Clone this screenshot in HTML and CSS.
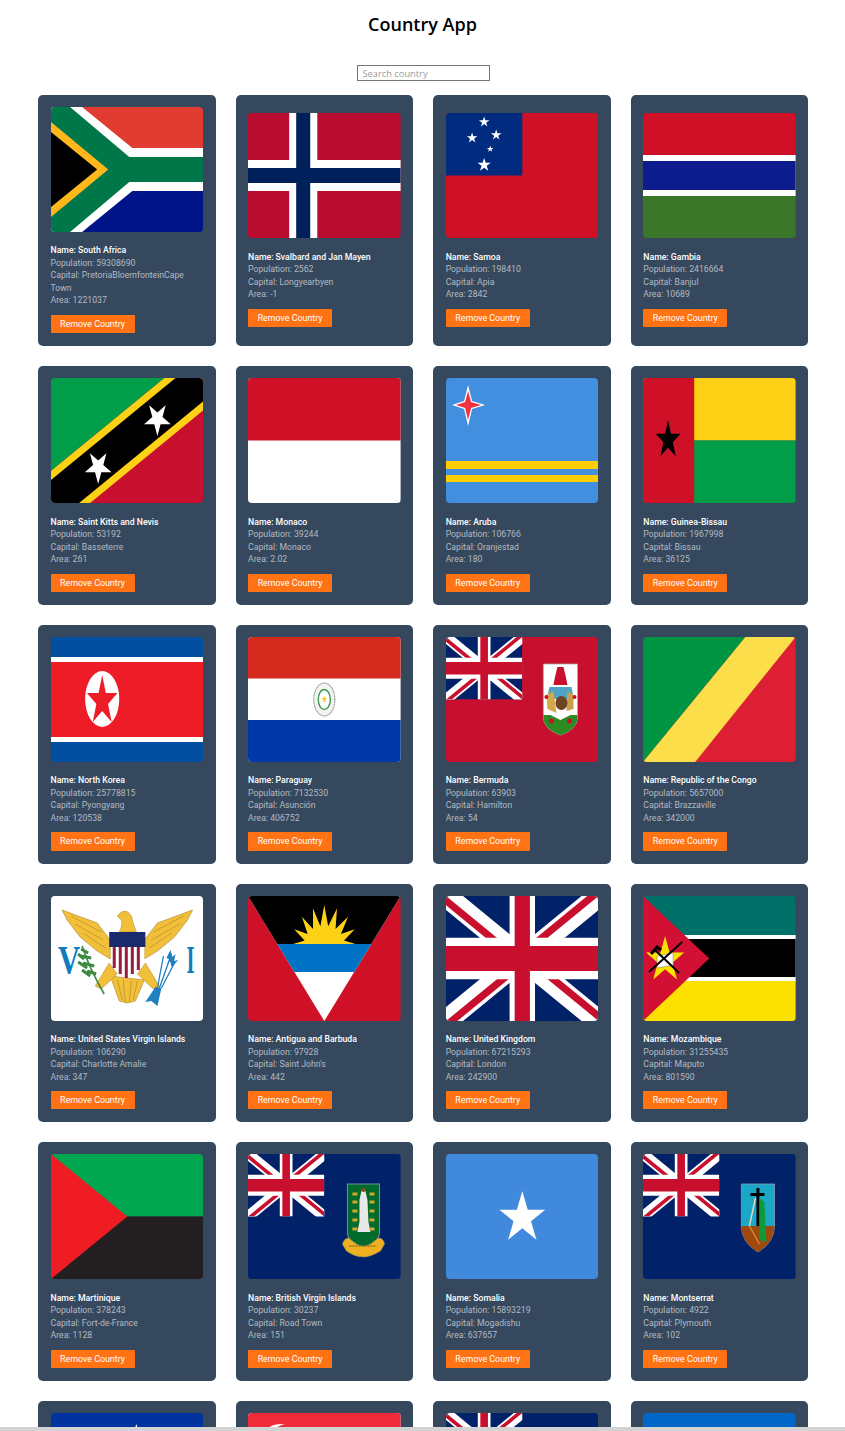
FILE: index.html
```html
<!DOCTYPE html>
<html lang="en">
<head>
  <meta charset="UTF-8" />
  <meta name="viewport" content="width=device-width, initial-scale=1.0" />
  <title>Country App</title>
  <link rel="stylesheet" href="styles.css">
</head>
<body>
  <!-- shared flag parts -->
  <svg class="defs" aria-hidden="true">
    <defs>
      <polygon id="star" points="0,-1 .225,-.309 .951,-.309 .363,.118 .588,.809 0,.382 -.588,.809 -.363,.118 -.951,-.309 -.225,-.309"/>
      <clipPath id="ujClip"><path d="M30,15h30v15zv15h-30zh-30v-15zv-15h30z"/></clipPath>
      <symbol id="uj" viewBox="0 0 60 30" preserveAspectRatio="none">
        <rect width="60" height="30" fill="#012169"/>
        <path d="M0,0L60,30M60,0L0,30" stroke="#fff" stroke-width="6"/>
        <path d="M0,0L60,30M60,0L0,30" stroke="#c8102e" stroke-width="4" clip-path="url(#ujClip)"/>
        <path d="M30,0v30M0,15h60" stroke="#fff" stroke-width="10"/>
        <path d="M30,0v30M0,15h60" stroke="#c8102e" stroke-width="6"/>
      </symbol>
    </defs>
  </svg>

  <h1 class="title">Country App</h1>

  <div class="search">
    <input class="search-input" type="text" placeholder="Search country" />
  </div>

  <div class="country-list">

    <div class="card">
      <svg class="flag" viewBox="0 0 152 125" preserveAspectRatio="none">
        <rect width="152" height="63" fill="#e03c31"/>
        <rect y="62" width="152" height="63" fill="#001489"/>
        <polygon points="0,0 31,0 81,41 152,41 152,84 81,84 31,125 0,125" fill="#fff"/>
        <polygon points="0,0 19,0 78,50 152,50 152,75 78,75 19,125 0,125" fill="#007749"/>
        <polygon points="0,15 57,62.5 0,110" fill="#ffb81c"/>
        <polygon points="0,25 46,62.5 0,100" fill="#000"/>
      </svg>
      <p class="name">Name: South Africa</p>
      <p class="info">Population: 59308690</p>
      <p class="info">Capital: PretoriaBloemfonteinCape Town</p>
      <p class="info">Area: 1221037</p>
      <button class="remove-btn">Remove Country</button>
    </div>

    <div class="card">
      <svg class="flag" viewBox="0 0 152 125" preserveAspectRatio="none">
        <rect width="152" height="125" fill="#ba0c2f"/>
        <rect x="41" width="28" height="125" fill="#fff"/>
        <rect y="47" width="152" height="31" fill="#fff"/>
        <rect x="48" width="14" height="125" fill="#00205b"/>
        <rect y="55" width="152" height="15" fill="#00205b"/>
      </svg>
      <p class="name">Name: Svalbard and Jan Mayen</p>
      <p class="info">Population: 2562</p>
      <p class="info">Capital: Longyearbyen</p>
      <p class="info">Area: -1</p>
      <button class="remove-btn">Remove Country</button>
    </div>

    <div class="card">
      <svg class="flag" viewBox="0 0 152 125" preserveAspectRatio="none">
        <rect width="152" height="125" fill="#ce1126"/>
        <rect width="76" height="62.5" fill="#002b7f"/>
        <use href="#star" fill="#fff" transform="translate(38,9) scale(5.5)"/>
        <use href="#star" fill="#fff" transform="translate(26,25) scale(5.5)"/>
        <use href="#star" fill="#fff" transform="translate(50,22) scale(5.5)"/>
        <use href="#star" fill="#fff" transform="translate(44,36) scale(3.5)"/>
        <use href="#star" fill="#fff" transform="translate(38,52) scale(7)"/>
      </svg>
      <p class="name">Name: Samoa</p>
      <p class="info">Population: 198410</p>
      <p class="info">Capital: Apia</p>
      <p class="info">Area: 2842</p>
      <button class="remove-btn">Remove Country</button>
    </div>

    <div class="card">
      <svg class="flag" viewBox="0 0 152 125" preserveAspectRatio="none">
        <rect width="152" height="42" fill="#ce1126"/>
        <rect y="42" width="152" height="41" fill="#fff"/>
        <rect y="48" width="152" height="29" fill="#0c1c8c"/>
        <rect y="83" width="152" height="42" fill="#3a7728"/>
      </svg>
      <p class="name">Name: Gambia</p>
      <p class="info">Population: 2416664</p>
      <p class="info">Capital: Banjul</p>
      <p class="info">Area: 10689</p>
      <button class="remove-btn">Remove Country</button>
    </div>

    <div class="card">
      <svg class="flag" viewBox="0 0 152 125" preserveAspectRatio="none">
        <rect width="152" height="125" fill="#c8102e"/>
        <polygon points="0,0 113,0 0,93" fill="#009e49"/>
        <polygon points="113,0 152,0 152,32 39,125 0,125 0,93" fill="#fcd116"/>
        <polygon points="124,0 152,0 152,23 28,125 0,125 0,102" fill="#000"/>
        <use href="#star" fill="#fff" transform="translate(106,41) rotate(180) scale(14,17)"/>
        <use href="#star" fill="#fff" transform="translate(47,89) rotate(180) scale(14,17)"/>
      </svg>
      <p class="name">Name: Saint Kitts and Nevis</p>
      <p class="info">Population: 53192</p>
      <p class="info">Capital: Basseterre</p>
      <p class="info">Area: 261</p>
      <button class="remove-btn">Remove Country</button>
    </div>

    <div class="card">
      <svg class="flag" viewBox="0 0 152 125" preserveAspectRatio="none">
        <rect width="152" height="125" fill="#fff"/>
        <rect width="152" height="62.5" fill="#ce1126"/>
      </svg>
      <p class="name">Name: Monaco</p>
      <p class="info">Population: 39244</p>
      <p class="info">Capital: Monaco</p>
      <p class="info">Area: 2.02</p>
      <button class="remove-btn">Remove Country</button>
    </div>

    <div class="card">
      <svg class="flag" viewBox="0 0 152 125" preserveAspectRatio="none">
        <rect width="152" height="125" fill="#418fde"/>
        <rect y="83" width="152" height="8" fill="#ffcd00"/>
        <rect y="97" width="152" height="7" fill="#ffcd00"/>
        <path d="M22,7L26,23L39,27L26,31L22,48L18,31L6,27L18,23Z" fill="#fff"/>
        <path d="M22,13L25,24L35,27L25,30L22,42L19,30L10,27L19,24Z" fill="#ef3340"/>
      </svg>
      <p class="name">Name: Aruba</p>
      <p class="info">Population: 106766</p>
      <p class="info">Capital: Oranjestad</p>
      <p class="info">Area: 180</p>
      <button class="remove-btn">Remove Country</button>
    </div>

    <div class="card">
      <svg class="flag" viewBox="0 0 152 125" preserveAspectRatio="none">
        <rect width="152" height="62.5" fill="#fcd116"/>
        <rect y="62.5" width="152" height="62.5" fill="#009e49"/>
        <rect width="51" height="125" fill="#ce1126"/>
        <use href="#star" fill="#000" transform="translate(25,62) scale(13,20)"/>
      </svg>
      <p class="name">Name: Guinea-Bissau</p>
      <p class="info">Population: 1967998</p>
      <p class="info">Capital: Bissau</p>
      <p class="info">Area: 36125</p>
      <button class="remove-btn">Remove Country</button>
    </div>

    <div class="card">
      <svg class="flag" viewBox="0 0 152 125" preserveAspectRatio="none">
        <rect width="152" height="125" fill="#024fa2"/>
        <rect y="20" width="152" height="85" fill="#fff"/>
        <rect y="25" width="152" height="75" fill="#ed1c27"/>
        <ellipse cx="51" cy="62" rx="17" ry="28" fill="#fff"/>
        <use href="#star" fill="#ed1c27" transform="translate(51,64) scale(16,26)"/>
      </svg>
      <p class="name">Name: North Korea</p>
      <p class="info">Population: 25778815</p>
      <p class="info">Capital: Pyongyang</p>
      <p class="info">Area: 120538</p>
      <button class="remove-btn">Remove Country</button>
    </div>

    <div class="card">
      <svg class="flag" viewBox="0 0 152 125" preserveAspectRatio="none">
        <rect width="152" height="125" fill="#fff"/>
        <rect width="152" height="41.5" fill="#d52b1e"/>
        <rect y="83" width="152" height="42" fill="#0038a8"/>
        <ellipse cx="76" cy="62.5" rx="10.5" ry="16.5" fill="#f4f4f0" stroke="#888" stroke-width="1" stroke-dasharray="1.5 .6"/>
        <ellipse cx="76" cy="62.5" rx="6" ry="10" fill="#fff" stroke="#3b9a55" stroke-width="1.4"/>
        <use href="#star" fill="#f2c81e" transform="translate(76,62.5) scale(2.8,4)"/>
      </svg>
      <p class="name">Name: Paraguay</p>
      <p class="info">Population: 7132530</p>
      <p class="info">Capital: Asunción</p>
      <p class="info">Area: 406752</p>
      <button class="remove-btn">Remove Country</button>
    </div>

    <div class="card">
      <svg class="flag" viewBox="0 0 152 125" preserveAspectRatio="none">
        <rect width="152" height="125" fill="#c8102e"/>
        <use href="#uj" width="76" height="62.5"/>
        <path d="M97,27H131V80Q131,92 114,98Q97,92 97,80Z" fill="#fff" stroke="#a9a9a9" stroke-width=".8"/>
        <path d="M97,78H104L114,83L124,78H131V80Q131,92 114,98Q97,92 97,80Z" fill="#2e8b22"/>
        <path d="M111,30H117L119,38L121,48H107L109,38Z" fill="#c8102e"/>
        <path d="M103,50H125L127,60L122,62H106L101,60Z" fill="#4fa3c7"/>
        <path d="M100,58L107,54L110,76L101,72Z" fill="#d4a94a"/>
        <path d="M127,58L121,54L120,74L127,72Z" fill="#c9a04a"/>
        <ellipse cx="115" cy="66" rx="6" ry="7" fill="#6e4422"/>
        <circle cx="100" cy="60" r="2" fill="#c8102e"/>
        <circle cx="128" cy="60" r="2" fill="#c8102e"/>
        <circle cx="105" cy="84" r="2.5" fill="#c8102e"/>
        <circle cx="123" cy="84" r="2.5" fill="#c8102e"/>
      </svg>
      <p class="name">Name: Bermuda</p>
      <p class="info">Population: 63903</p>
      <p class="info">Capital: Hamilton</p>
      <p class="info">Area: 54</p>
      <button class="remove-btn">Remove Country</button>
    </div>

    <div class="card">
      <svg class="flag" viewBox="0 0 152 125" preserveAspectRatio="none">
        <rect width="152" height="125" fill="#dc1f33"/>
        <polygon points="0,0 102,0 0,125" fill="#009543"/>
        <polygon points="102,0 152,0 52,125 0,125" fill="#fbde4a"/>
      </svg>
      <p class="name">Name: Republic of the Congo</p>
      <p class="info">Population: 5657000</p>
      <p class="info">Capital: Brazzaville</p>
      <p class="info">Area: 342000</p>
      <button class="remove-btn">Remove Country</button>
    </div>

    <div class="card">
      <svg class="flag" viewBox="0 0 152 125" preserveAspectRatio="none">
        <rect width="152" height="125" fill="#fff"/>
        <text class="flag-letter" x="7" y="77" textLength="22" lengthAdjust="spacingAndGlyphs">V</text>
        <text class="flag-letter" x="135" y="77" textLength="8" lengthAdjust="spacingAndGlyphs">I</text>
        <polygon points="11,14 46,27 59,44 59,63 46,55 29,41 16,24" fill="#f2bf3a" stroke="#a88427" stroke-width=".6"/>
        <polygon points="141,14 106,27 93,44 93,63 106,55 123,41 136,24" fill="#f2bf3a" stroke="#a88427" stroke-width=".6"/>
        <path d="M20,20L50,36M24,28L52,44M32,37L54,52M132,20L102,36M128,28L100,44M120,37L98,52" stroke="#a88427" stroke-width=".6"/>
        <path d="M66,20Q74,10 80,20Q82,28 85,36H68Q72,28 70,24Z" fill="#f2bf3a" stroke="#a88427" stroke-width=".5"/>
        <polygon points="59,80 93,84 84,105 76,107 68,105" fill="#f2bf3a" stroke="#a88427" stroke-width=".6"/>
        <path d="M66,84L71,104M72,84L74,106M80,85L78,106M86,85L82,104" stroke="#a88427" stroke-width=".6"/>
        <path d="M58,67L44,90L50,93L66,78ZM94,67L108,90L102,93L86,78Z" fill="#f2bf3a" stroke="#a88427" stroke-width=".5"/>
        <rect x="58" y="36" width="36" height="15" fill="#1a2a6c"/>
        <path d="M60,51H93V66Q90,76 76,82Q62,76 60,66Z" fill="#fff"/>
        <path d="M63,51V72M69,51V78M75,51V82M81,51V78M87,51V74" stroke="#9b1b3f" stroke-width="3"/>
        <path d="M31,50Q38,72 53,98" stroke="#3d8b40" stroke-width="1.6" fill="none"/>
        <path d="M30,53L37,57M30,60L40,62M32,67L43,70M36,75L45,78M27,58L33,63M27,66L36,72M31,74L39,80" stroke="#3d8b40" stroke-width="3"/>
        <path d="M106,92L112,60M108,92L120,58M110,92L124,65" stroke="#1f7fc1" stroke-width="1.3"/>
        <path d="M119,54L122,65L115,62ZM124,58L122,68L117,65ZM127,64L120,71L119,66Z" fill="#1f7fc1"/>
        <polygon points="104,91 110,92 106,110 100,105 94,106" fill="#1f7fc1"/>
      </svg>
      <p class="name">Name: United States Virgin Islands</p>
      <p class="info">Population: 106290</p>
      <p class="info">Capital: Charlotte Amalie</p>
      <p class="info">Area: 347</p>
      <button class="remove-btn">Remove Country</button>
    </div>

    <div class="card">
      <svg class="flag" viewBox="0 0 152 125" preserveAspectRatio="none">
        <rect width="152" height="125" fill="#ce1126"/>
        <polygon points="0,0 152,0 76,125" fill="#fff"/>
        <polygon points="0,0 152,0 122.8,48 29.2,48" fill="#000"/>
        <polygon points="29.2,48 122.8,48 105.8,76 46.2,76" fill="#0072c6"/>
        <polygon points="45,48 56.4,44.6 46,33.3 59.4,38 53.7,20.7 64.8,33.1 64.7,12.3 72.1,30.3 76,9 79.9,30.3 88.7,12.3 87.2,33.1 99.7,20.7 92.6,38 106.3,33.3 95.6,44.6 107,48" fill="#fcd116"/>
      </svg>
      <p class="name">Name: Antigua and Barbuda</p>
      <p class="info">Population: 97928</p>
      <p class="info">Capital: Saint John's</p>
      <p class="info">Area: 442</p>
      <button class="remove-btn">Remove Country</button>
    </div>

    <div class="card">
      <svg class="flag" viewBox="0 0 152 125" preserveAspectRatio="none">
        <use href="#uj" width="152" height="125"/>
      </svg>
      <p class="name">Name: United Kingdom</p>
      <p class="info">Population: 67215293</p>
      <p class="info">Capital: London</p>
      <p class="info">Area: 242900</p>
      <button class="remove-btn">Remove Country</button>
    </div>

    <div class="card">
      <svg class="flag" viewBox="0 0 152 125" preserveAspectRatio="none">
        <rect width="152" height="39" fill="#007168"/>
        <rect y="39" width="152" height="47" fill="#fff"/>
        <rect y="43" width="152" height="38" fill="#000"/>
        <rect y="85" width="152" height="40" fill="#fce100"/>
        <polygon points="0,0 66,62.5 0,125" fill="#d21034"/>
        <use href="#star" fill="#fce100" transform="translate(22,64) scale(20,24)"/>
        <path d="M14,60L30,57V69L14,72Z" fill="#fff" stroke="#777" stroke-width=".5"/>
        <path d="M6,76L39,46M12,54L36,77" stroke="#000" stroke-width="2"/>
        <path d="M8,58L14,51L18,54" stroke="#000" stroke-width="3" fill="none"/>
      </svg>
      <p class="name">Name: Mozambique</p>
      <p class="info">Population: 31255435</p>
      <p class="info">Capital: Maputo</p>
      <p class="info">Area: 801590</p>
      <button class="remove-btn">Remove Country</button>
    </div>

    <div class="card">
      <svg class="flag" viewBox="0 0 152 125" preserveAspectRatio="none">
        <rect width="152" height="62.5" fill="#00a650"/>
        <rect y="62.5" width="152" height="62.5" fill="#231f20"/>
        <polygon points="0,0 76,62.5 0,125" fill="#ef1c24"/>
      </svg>
      <p class="name">Name: Martinique</p>
      <p class="info">Population: 378243</p>
      <p class="info">Capital: Fort-de-France</p>
      <p class="info">Area: 1128</p>
      <button class="remove-btn">Remove Country</button>
    </div>

    <div class="card">
      <svg class="flag" viewBox="0 0 152 125" preserveAspectRatio="none">
        <rect width="152" height="125" fill="#012169"/>
        <use href="#uj" width="76" height="62.5"/>
        <path d="M99,30H131V78Q131,88 115,94Q99,88 99,78Z" fill="#006b2d" stroke="#7d8c9a" stroke-width="1"/>
        <path d="M113,37H117L119,46L120,68L122,78H109L111,68L111,46Z" fill="#e8e8e8"/>
        <circle cx="115" cy="36" r="2" fill="#8a4a20"/>
        <path d="M104,40h5M104,48h5M104,57h5M104,66h5M104,75h5M121,40h5M121,48h5M121,57h5M121,66h5M121,75h5" stroke="#d4a928" stroke-width="3"/>
        <path d="M94,90Q96,84 100,84L108,90Q115,94 122,90L130,84Q135,84 136,90L132,97Q122,103 115,103Q106,103 98,97Z" fill="#eeb020" stroke="#8a8a70" stroke-width=".6"/>
        <path d="M101,92L128,92" stroke="#6b5a20" stroke-width="1.2" stroke-dasharray="2 1"/>
      </svg>
      <p class="name">Name: British Virgin Islands</p>
      <p class="info">Population: 30237</p>
      <p class="info">Capital: Road Town</p>
      <p class="info">Area: 151</p>
      <button class="remove-btn">Remove Country</button>
    </div>

    <div class="card">
      <svg class="flag" viewBox="0 0 152 125" preserveAspectRatio="none">
        <rect width="152" height="125" fill="#4189dd"/>
        <use href="#star" fill="#fff" transform="translate(76,64) scale(24,27)"/>
      </svg>
      <p class="name">Name: Somalia</p>
      <p class="info">Population: 15893219</p>
      <p class="info">Capital: Mogadishu</p>
      <p class="info">Area: 637657</p>
      <button class="remove-btn">Remove Country</button>
    </div>

    <div class="card">
      <svg class="flag" viewBox="0 0 152 125" preserveAspectRatio="none">
        <rect width="152" height="125" fill="#012169"/>
        <use href="#uj" width="76" height="62.5"/>
        <path d="M98,30H131V72Q131,88 114.5,98Q98,88 98,72Z" fill="#1ba8c8" stroke="#8ba0b4" stroke-width=".8"/>
        <path d="M98,72H131Q131,88 114.5,98Q98,88 98,72Z" fill="#a0490f"/>
        <path d="M113,34h3v38h-3zM107,39h14v3h-14z" fill="#000"/>
        <path d="M116,44L121,48L122,70L123,88L116,86Z" fill="#0d9a3a"/>
        <path d="M106,72L116,90" stroke="#d9a441" stroke-width="1"/>
        <path d="M112,44L109,58L106,72" stroke="#e8d8c0" stroke-width="1.4" fill="none"/>
      </svg>
      <p class="name">Name: Montserrat</p>
      <p class="info">Population: 4922</p>
      <p class="info">Capital: Plymouth</p>
      <p class="info">Area: 102</p>
      <button class="remove-btn">Remove Country</button>
    </div>

    <!-- last row, cut off by the window -->
    <div class="card">
      <svg class="flag" viewBox="0 0 152 125" preserveAspectRatio="none">
        <rect width="152" height="125" fill="#0033a0"/>
        <use href="#star" fill="#fff" transform="translate(85,21) scale(10)"/>
      </svg>
    </div>

    <div class="card">
      <svg class="flag" viewBox="0 0 152 125" preserveAspectRatio="none">
        <rect width="152" height="125" fill="#fff"/>
        <rect width="152" height="62.5" fill="#ef2b3a"/>
        <circle cx="32" cy="31" r="20" fill="#fff"/>
        <circle cx="40" cy="31" r="20" fill="#ef2b3a"/>
      </svg>
    </div>

    <div class="card">
      <svg class="flag" viewBox="0 0 152 125" preserveAspectRatio="none">
        <rect width="152" height="125" fill="#012169"/>
        <use href="#uj" width="76" height="62.5"/>
      </svg>
    </div>

    <div class="card">
      <svg class="flag" viewBox="0 0 152 125" preserveAspectRatio="none">
        <rect width="152" height="125" fill="#0066c8"/>
      </svg>
    </div>

  </div>

  <div class="scrollbar"></div>
</body>
</html>
```

FILE: styles.css
```css
html, body {
  height: 100%;
  overflow: hidden;
}

body {
  margin: 0;
  background-color: #ffffff;
  font-family: Roboto, "Noto Sans", sans-serif;
}

.defs {
  display: block;
  width: 0;
  height: 0;
}

.title {
  margin: 0;
  padding-top: 12px;
  height: 42px;
  line-height: 24px;
  text-align: center;
  font-family: "Open Sans", sans-serif;
  font-size: 18px;
  font-weight: 600;
  color: #000000;
}

.search {
  display: flex;
  justify-content: center;
  padding-top: 11px;
  height: 30px;
  margin-left: 1px;
}

.search-input {
  box-sizing: border-box;
  width: 133px;
  height: 16px;
  padding: 0 5px;
  border: 1px solid #767676;
  font-family: "Open Sans", sans-serif;
  font-size: 9.3px;
}

.search-input::placeholder {
  color: #9a9aa2;
}

.country-list {
  display: grid;
  grid-template-columns: repeat(4, 1fr);
  gap: 20px;
  width: 770.4px;
  margin-left: 38px;
  margin-top: -0.25px;
}

.card {
  display: flex;
  flex-direction: column;
  justify-content: center;
  align-items: flex-start;
  padding: 12px 12.5px 13px;
  background-color: #35485e;
  border-radius: 5px;
}

.flag {
  display: block;
  flex-shrink: 0;
  width: 100%;
  height: 125px;
  margin-bottom: 12.5px;
  border-radius: 4px;
}

.flag-letter {
  font-family: "Liberation Serif", serif;
  font-size: 41px;
  font-weight: 700;
  fill: #0f7cbf;
}

.name,
.info {
  margin: 0;
  font-size: 8.7px;
  line-height: 12.5px;
}

.name {
  color: #ffffff;
  font-weight: 500;
}

.info {
  color: #b4bac1;
}

.remove-btn {
  width: 84px;
  height: 18.25px;
  margin-top: 8px;
  padding: 0;
  background-color: #ff7315;
  color: #ffffff;
  border: none;
  border-radius: 1px;
  font-family: inherit;
  font-size: 8.9px;
  cursor: pointer;
}

.scrollbar {
  position: fixed;
  left: 0;
  right: 0;
  bottom: 0;
  height: 4px;
  background-color: #d3d3d3;
}
```
